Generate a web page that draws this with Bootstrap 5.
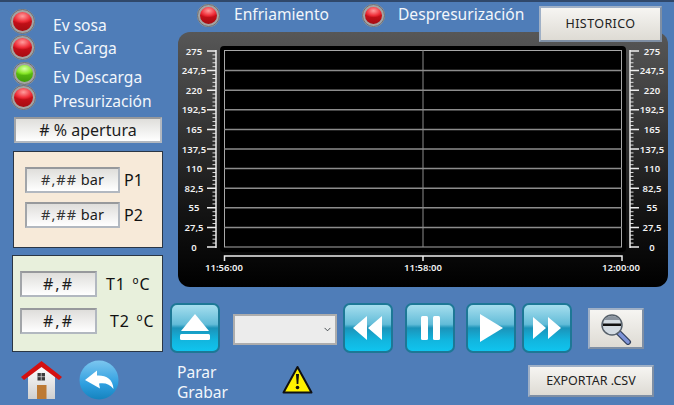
<!DOCTYPE html>
<html lang="en">
<head>
  <meta charset="UTF-8">
  <title>Historico</title>
  <link href="https://cdn.jsdelivr.net/npm/bootstrap@5.3.0/dist/css/bootstrap.min.css" rel="stylesheet">
  <style>
    body { background: #4f7db8; margin: 0; font-family: "Noto Sans", "Liberation Sans", sans-serif; overflow: hidden; }
    .pantalla { width: 674px; height: 405px; border-top: 2px solid #30486a; }
    .arriba { height: 353px; }
    .izq { width: 170px; flex: none; }
    .estado { height: 115px; }
    .lamparas { padding: 7px 0 0 10px; width: 53px; flex: none; }
    .lamp { width: 25px; height: 25px; border-radius: 50%; flex: none; border: 3px solid #a3a3a3; outline: 1px solid #6b6f75; outline-offset: -1px;
      background: radial-gradient(ellipse 60% 40% at 50% 22%, #ff9d9d 0, #f0303a 70%, transparent 100%), linear-gradient(#e8141e, #a50c12); }
    .lamp.verde { width: 23px; height: 23px; margin-left: 3px;
      background: radial-gradient(ellipse 60% 40% at 50% 22%, #d8ffa8 0, #8ae82a 70%, transparent 100%), linear-gradient(#74d814, #3f9c0a); }
    .lamp.chica { width: 23px; height: 23px; }
    .l2 { margin-top: 1px; }
    .l3 { margin-top: 2px; }
    .l4 { margin-left: 1px; }
    .etiquetas { padding-top: 12px; color: #f2f6fb; font-size: 15.6px; line-height: 23px; white-space: nowrap; }
    .e3 { margin-top: 6px; }
    .e4 { margin-top: 1px; }
    .campo { border: 2px solid #b2b8c0; border-top-color: #97999c; border-left-color: #a2a5a9; background: linear-gradient(#dfdedb, #fff); color: #1c1c1c; font-size: 14.5px;
      display: flex; align-items: center; justify-content: center; white-space: pre; }
    .almo { letter-spacing: 1px; color: #333; }
    .apertura { margin-left: 14px; width: 148px; height: 26px; font-size: 16px; }
    .panel { border: 1.5px solid #2a3645; height: 97px; color: #111; font-size: 16px; }
    .panel-p { background: #f7ead9; margin: 8px 0 0 13px; width: 150px; padding: 15px 0 0 11px; }
    .panel-t { background: #e8f0dc; margin: 7px 0 0 12px; width: 151px; padding: 15px 0 0 7px; }
    .fila-p { gap: 4px; height: 26px; margin-bottom: 9px; }
    .fila-t { gap: 9px; height: 26px; margin-bottom: 11px; word-spacing: 2px; letter-spacing: .8px; }
    .ancho-p { width: 95px; height: 26px; }
    .ancho-t { width: 77px; height: 26px; font-size: 16px; letter-spacing: 2px; word-spacing: 0; }
    .der { width: 504px; flex: none; }
    .cabecera { height: 30px; padding: 0 0 4px 27px; color: #f2f6fb; font-size: 15.6px; white-space: nowrap; }
    .cabecera span.txt1 { margin: 0 33px 0 14px; }
    .cabecera span.txt2 { margin-left: 13px; }
    .boton-gris { background: linear-gradient(#f6f5f2, #dedbd4); border: 2px solid #9fb0c6; border-right-color: #7f8fa4; border-bottom-color: #7f8fa4;
      border-radius: 0; color: #222; font-family: "Noto Sans", sans-serif; font-size: 12.5px; padding: 0; display: flex; align-items: center; justify-content: center; }
    .historico { position: absolute; left: 539px; top: 4px; width: 123px; height: 36px; z-index: 2; letter-spacing: .4px; }
    .grafica { width: 490px; height: 255px; margin-left: 8px; border-radius: 12px; display: block;
      background: linear-gradient(#575757 0, #3c3c3c 30%, #141414 70%, #000 100%); }
    .transporte { margin-top: 16px; }
    .multi { width: 50px; height: 50px; flex: none; padding: 0; border: 2px solid #1d7896; border-radius: 7px;
      background: linear-gradient(#a6deee 0, #62bcd8 42%, #1b93b9 50%, #12b4dd 75%, #10c4ee 100%); }
    .multi svg { display: block; margin: auto; }
    .selector { width: 104px; height: 31px; margin: 11px 6px 0 13px; border: 2px solid #adadad; border-radius: 0; padding: 0;
      background-color: #ececec; background-size: 9px 7px; background-position: right 3px center; }
    .m-pausa { margin-left: 12px; }
    .m-play { margin-left: 11px; }
    .m-ff { margin-left: 6px; }
    .lupa { width: 56px; height: 41px; margin: 5px 0 0 16px; }
    .abajo { height: 50px; padding-top: 5px; }
    .casa { margin-left: 20px; }
    .volver { margin-left: 16px; }
    .grabar { margin: 2px 0 0 58px; width: 105px; color: #f2f6fb; font-size: 15.6px; line-height: 20px; }
    .peligro { margin-top: 5px; }
    .exportar { width: 126px; height: 32px; margin: 5px 0 0 215px; }
  </style>
</head>
<body>

<div class="pantalla position-relative">
  <div class="arriba d-flex">
    <!-- columna izquierda -->
    <div class="izq">
      <div class="estado d-flex">
        <div class="lamparas d-flex flex-column">
          <div class="lamp"></div>
          <div class="lamp l2"></div>
          <div class="lamp verde l3"></div>
          <div class="lamp l4"></div>
        </div>
        <div class="etiquetas">
          <div>Ev sosa</div>
          <div>Ev Carga</div>
          <div class="e3">Ev Descarga</div>
          <div class="e4">Presurización</div>
        </div>
      </div>
      <div class="campo apertura"># % apertura</div>
      <div class="panel panel-p">
        <div class="fila-p d-flex align-items-center"><div class="campo ancho-p"><span class="almo">#,##</span> bar</div>P1</div>
        <div class="fila-p d-flex align-items-center"><div class="campo ancho-p"><span class="almo">#,##</span> bar</div>P2</div>
      </div>
      <div class="panel panel-t">
        <div class="fila-t d-flex align-items-center"><div class="campo ancho-t">#,#</div>T1 ºC</div>
        <div class="fila-t d-flex align-items-center"><div class="campo ancho-t">#,#</div><span class="ms-1">T2 ºC</span></div>
      </div>
    </div>

    <!-- columna derecha -->
    <div class="der">
      <div class="cabecera d-flex align-items-center">
        <div class="lamp chica"></div><span class="txt1">Enfriamiento</span>
        <div class="lamp chica"></div><span class="txt2">Despresurización</span>
      </div>
      <svg class="grafica" id="grafica" viewBox="178 32 490 255" xmlns="http://www.w3.org/2000/svg"></svg>
      <div class="transporte d-flex align-items-start">
        <button class="multi" type="button"><svg width="34" height="30" viewBox="0 0 34 30"><path d="M17 1 31 18H3Z" fill="#fff"/><rect x="2" y="21" width="30" height="6" rx="1.5" fill="#fff"/></svg></button>
        <select class="form-select selector"></select>
        <button class="multi" type="button"><svg width="32" height="26" viewBox="0 0 32 26"><path d="M15 1V25L1 13ZM30 1V25L16 13Z" fill="#fff"/></svg></button>
        <button class="multi m-pausa" type="button"><svg width="20" height="26" viewBox="0 0 20 26"><rect x="1" y="1" width="7" height="24" rx="1.5" fill="#fff"/><rect x="13" y="1" width="7" height="24" rx="1.5" fill="#fff"/></svg></button>
        <button class="multi m-play" type="button"><svg width="24" height="28" viewBox="0 0 24 28"><path d="M1 0V28L24 14Z" fill="#fff"/></svg></button>
        <button class="multi m-ff" type="button"><svg width="30" height="24" viewBox="0 0 30 24"><path d="M1 1V23L14 12ZM16 1V23L29 12Z" fill="#fff"/></svg></button>
        <button class="btn boton-gris lupa" type="button" aria-label="Zoom">
          <svg width="32" height="32" viewBox="0 0 32 32">
            <path d="M18 19 28 29" stroke="#33415f" stroke-width="6" stroke-linecap="round"/>
            <path d="M18 19 28 29" stroke="#7e93d8" stroke-width="3.5" stroke-linecap="round"/>
            <circle cx="12" cy="12" r="10" fill="#d3dbe2" stroke="#56606a" stroke-width="1.5"/>
            <path d="M4 7A10 10 0 0 1 20 7Z" fill="#8a939e"/>
            <rect x="3" y="10.5" width="18" height="2.5" fill="#111"/>
          </svg>
        </button>
      </div>
    </div>
  </div>

  <button class="btn boton-gris historico" type="button">HISTORICO</button>

  <div class="abajo d-flex align-items-start">
    <svg class="casa" width="43" height="40" viewBox="0 0 43 40">
      <defs><linearGradient id="pared" x1="0" y1="0" x2="0" y2="1"><stop offset="0" stop-color="#fff"/><stop offset="1" stop-color="#cfcfcf"/></linearGradient></defs>
      <path d="M8 16 21.500 5 35 16V39H8Z" fill="url(#pared)"/>
      <path d="M1 17 21.500 1 42 17 39 20 21.500 7 4 20Z" fill="#d51010"/>
      <rect x="17.500" y="13" width="7.500" height="7.500" fill="#3b3b3b"/>
      <path d="M21.250 13V20.500M17.500 16.700H25" stroke="#ddd" stroke-width=".7"/>
      <rect x="17" y="25" width="9.500" height="14" fill="#bd7a34"/>
    </svg>
    <svg class="volver" width="40" height="40" viewBox="0 0 40 40">
      <defs><linearGradient id="azul" x1="0" y1="0" x2="0" y2="1"><stop offset="0" stop-color="#7cc6ef"/><stop offset=".6" stop-color="#2f9fe0"/><stop offset="1" stop-color="#1583be"/></linearGradient></defs>
      <circle cx="20" cy="20" r="19.500" fill="url(#azul)"/>
      <path d="M6 20 18 10.500V15.500C27 15 34 19 34.500 29 31 24 26 22.500 20 23.500L21 28.500Z" fill="#fff"/>
    </svg>
    <div class="grabar">Parar<br>Grabar</div>
    <svg class="peligro" width="31" height="29" viewBox="0 0 31 29">
      <path d="M15.500 2 29.500 27.500H1.500Z" fill="#fff200" stroke="#111" stroke-width="2" stroke-linejoin="round"/>
      <path d="M14 9H17L16.300 19H14.700Z" fill="#111"/><circle cx="15.500" cy="22.500" r="1.800" fill="#111"/>
    </svg>
    <button class="btn boton-gris exportar" type="button">EXPORTAR .CSV</button>
  </div>
</div>

<script src="https://cdn.jsdelivr.net/npm/bootstrap@5.3.0/dist/js/bootstrap.bundle.min.js"></script>

<!-- Dibuja ejes y rejilla de la grafica -->
<script>
  const etiquetas = ['275', '247,5', '220', '192,5', '165', '137,5', '110', '82,5', '55', '27,5', '0'];
  const paso = 19.6, y0 = 51;
  const texto = 'font-family="Noto Sans, sans-serif" font-size="9.500" font-weight="600" fill="#f2f2f2" text-anchor="middle"';
  let s = '<rect x="220" y="46" width="406" height="206" rx="4" fill="#000"/>';
  s += '<rect x="224.500" y="50.500" width="397" height="196.500" fill="none" stroke="#a8a8a8"/>';
  etiquetas.forEach((t, i) => {
    const y = y0 + i * paso;
    if (i > 0 && i < 10) s += `<path d="M224 ${y}H622" stroke="#8c8c8c" stroke-width="1.500"/>`;
    s += `<path d="M207 ${y}H216M630 ${y}H639" stroke="#eee" stroke-width="1.500"/>`;
    s += `<text x="194" y="${y + 3.5}" ${texto}>${t}</text><text x="652" y="${y + 3.5}" ${texto}>${t}</text>`;
    if (i < 10) {
      for (let j = 1; j < 5; j++) {
        const ym = y + j * paso / 5;
        s += `<path d="M212.500 ${ym}H216M630 ${ym}H633.500" stroke="#ddd"/>`;
      }
    }
  });
  s += '<path d="M423 50V247" stroke="#8c8c8c"/>';
  s += '<path d="M216 50V248M630 50V248" stroke="#eee" stroke-width="1.500"/>';
  s += '<path d="M224.500 261V256H622V261M423 256V261" fill="none" stroke="#eee" stroke-width="1.500"/>';
  [[224, '11:56:00'], [423, '11:58:00'], [621, '12:00:00']].forEach(([x, t]) => {
    s += `<text x="${x}" y="271" ${texto}>${t}</text>`;
  });
  document.getElementById('grafica').innerHTML = s;
</script>

</body>
</html>
